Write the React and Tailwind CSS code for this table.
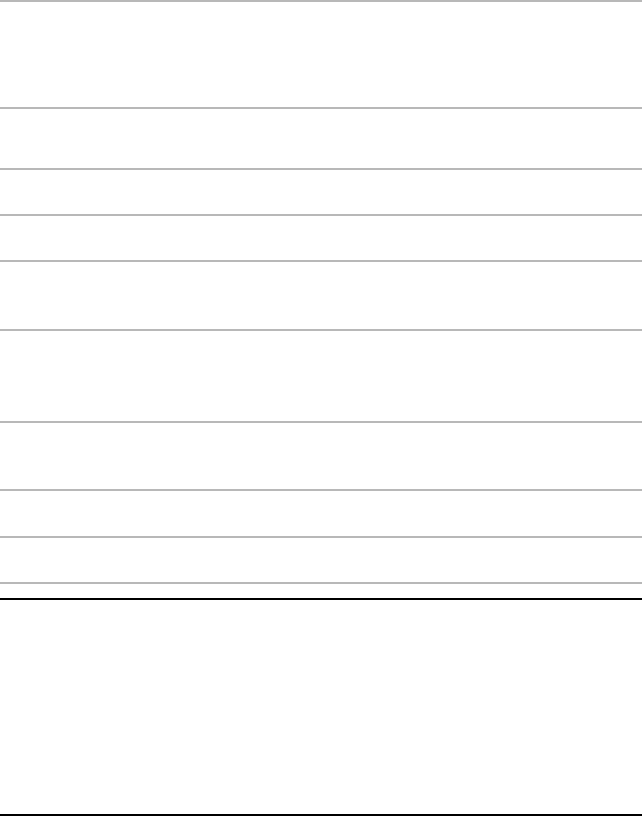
const ROWS = [107, 61, 46, 46, 69, 92, 68, 47, 46];

export default function App() {
  return (
    <div className="w-[642px] h-[816px] bg-white flex flex-col font-['Liberation_Sans',sans-serif]">
      <div className="flex flex-col">
        {ROWS.map((h, i) => (
          <div key={i} className="border-t-2 border-[#b8b8b8] box-border" style={{ height: h }} />
        ))}
        <div className="border-t-2 border-[#b8b8b8]" />
      </div>
      <div className="mt-[14px] h-[219px] border-y-2 border-black" />
    </div>
  );
}
